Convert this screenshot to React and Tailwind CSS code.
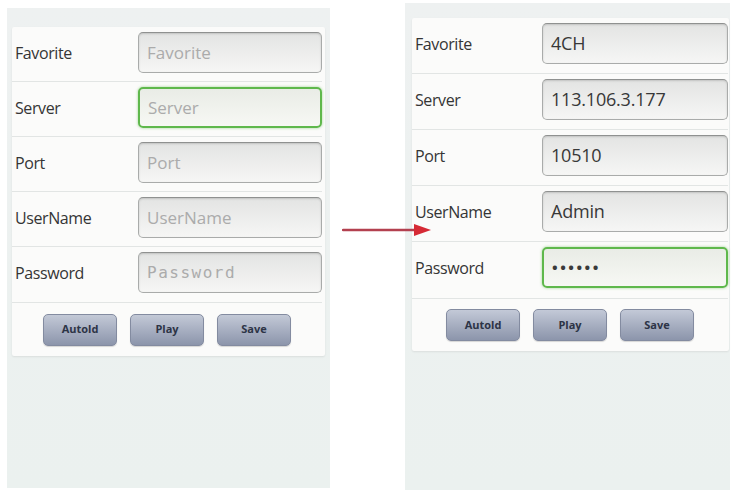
import React from 'react';

const font = { fontFamily: '"Open Sans", "Noto Sans", sans-serif' };
const mono = { fontFamily: '"DejaVu Sans Mono", "Liberation Mono", monospace' };

const Field = ({ label, value, placeholder, focused, secret, rowClass, labelClass }) => (
  <div className={'flex items-start border-b border-[#e2e5e4] pt-[5px] last:border-b-0 ' + rowClass}>
    <div className={'flex h-[41px] items-center pl-[3px] text-[16px] font-medium tracking-[-0.4px] text-[#353535] ' + labelClass}>
      {label}
    </div>
    <div
      className={
        focused
          ? 'flex h-[41px] flex-1 items-center rounded-[5px] border-2 border-[#5fb84c] bg-gradient-to-b from-[#e9ece6] to-[#f7f8f4] px-[8px] shadow-[0_0_3px_rgba(95,184,76,0.6)]'
          : 'flex h-[41px] flex-1 items-center rounded-[5px] border border-[#a9abaa] border-t-[#8f9190] bg-gradient-to-b from-[#e3e4e3] to-[#f6f6f5] px-[8px] shadow-[inset_0_1px_2px_rgba(0,0,0,0.15)]'
      }
    >
      {value ? (
        secret ? (
          <span className="text-[15px] font-bold tracking-[2.5px] text-[#3a3a3a]">{value}</span>
        ) : (
          <span className="text-[18px] font-medium tracking-[-0.2px] text-[#383838]">{value}</span>
        )
      ) : secret ? (
        <span className="text-[16px] tracking-[1.5px] text-[#ababab]" style={mono}>{placeholder}</span>
      ) : (
        <span className="text-[17px] text-[#ababab]">{placeholder}</span>
      )}
    </div>
  </div>
);

const Btn = ({ children }) => (
  <button className="flex h-[32px] w-[74px] items-center justify-center rounded-[5px] border border-[#838ba0] bg-gradient-to-b from-[#c3c9d7] to-[#8c95ab] text-[11px] font-bold text-[#2d3446] shadow-[0_1px_1px_rgba(0,0,0,0.15)]">
    {children}
  </button>
);

const Phone = ({ fields, className, cardClass, rowClass, labelClass, btnRow }) => (
  <div className={'flex flex-col bg-gradient-to-b from-[#eef1f1] to-[#ebf1ef] ' + className}>
    <div className={'rounded-[2px] bg-[#fbfbfa] shadow-[0_1px_2px_rgba(0,0,0,0.08)] ' + cardClass}>
      <div className="flex flex-col">
        {fields.map((f) => (
          <Field key={f.label} {...f} rowClass={rowClass} labelClass={labelClass} />
        ))}
      </div>
      <div className={'flex items-center justify-center gap-[13px] border-t border-[#e2e5e4] ' + btnRow}>
        <Btn>Autold</Btn>
        <Btn>Play</Btn>
        <Btn>Save</Btn>
      </div>
    </div>
  </div>
);

export default function App() {
  const left = [
    { label: 'Favorite', placeholder: 'Favorite' },
    { label: 'Server', placeholder: 'Server', focused: true },
    { label: 'Port', placeholder: 'Port' },
    { label: 'UserName', placeholder: 'UserName' },
    { label: 'Password', placeholder: 'Password', secret: true },
  ];
  const right = [
    { label: 'Favorite', value: '4CH' },
    { label: 'Server', value: '113.106.3.177' },
    { label: 'Port', value: '10510' },
    { label: 'UserName', value: 'Admin' },
    { label: 'Password', value: '••••••', focused: true, secret: true },
  ];

  return (
    <div className="relative flex h-[501px] w-[740px] items-start bg-white" style={font}>
      <Phone
        fields={left}
        className="ml-[7px] mt-[8px] h-[480px] w-[323px] pt-[19px]"
        cardClass="mx-[5px] pr-[3px]"
        rowClass="h-[55px]"
        labelClass="w-[126px]"
        btnRow="h-[54px]"
      />
      <Phone
        fields={right}
        className="ml-[75px] mt-[3px] h-[487px] w-[325px] pt-[15px]"
        cardClass="ml-[7px] mr-[1px] pr-[1px]"
        rowClass="h-[56px]"
        labelClass="w-[130px]"
        btnRow="h-[53px]"
      />

      {/* arrow */}
      <svg className="absolute left-[342px] top-[222px]" width="92" height="16" viewBox="0 0 92 16">
        <line x1="1" y1="8" x2="76" y2="8" stroke="#b3404f" strokeWidth="2.5" strokeLinecap="round" />
        <path d="M72 2 L89 8 L72 14 Z" fill="#d62a35" />
      </svg>
    </div>
  );
}
